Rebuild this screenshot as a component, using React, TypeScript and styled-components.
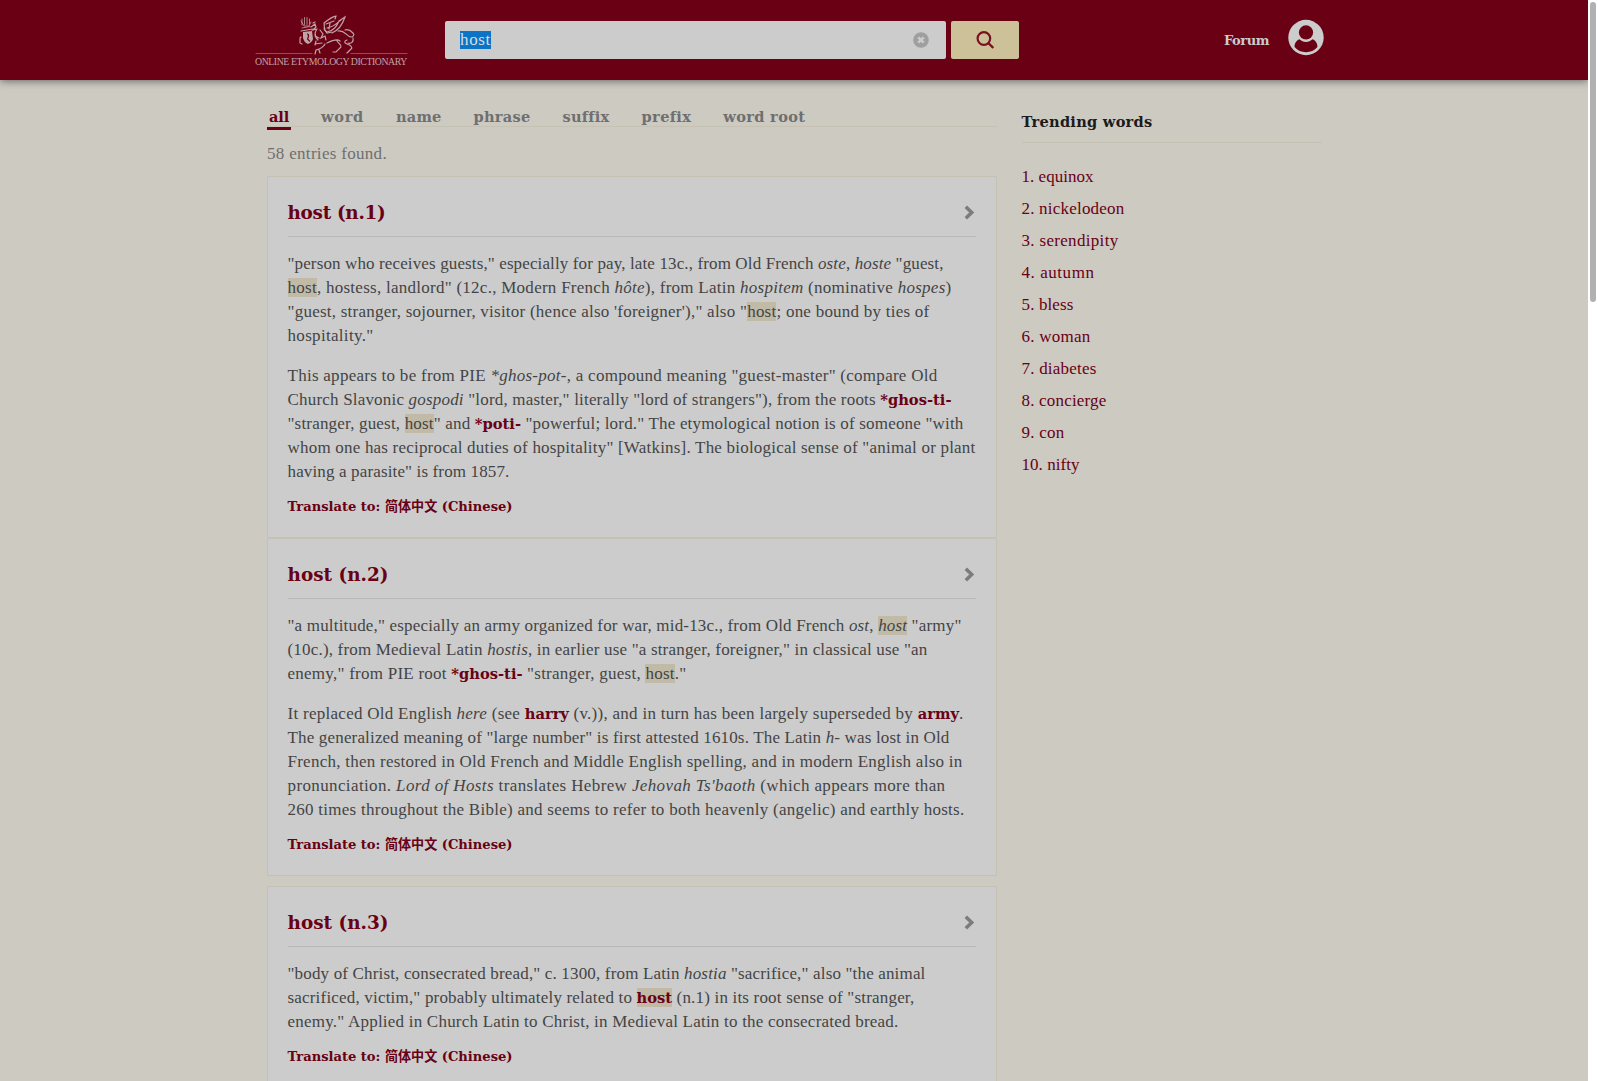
import React, { useLayoutEffect, useRef, useState } from "react";
import styled, { createGlobalStyle, css } from "styled-components";

const colors = {
  page: "#cdcac2",
  card: "#cccccc",
  brand: "#690014",
  text: "#444444",
  muted: "#6f6f6f",
  rule: "#c5c1b3",
  mark: "#c1baa6",
};

const GlobalStyle = createGlobalStyle`
  * { box-sizing: border-box; }
  body {
    margin: 0;
    background: #fff;
    overflow: hidden;
    font-family: Georgia, "Liberation Serif", "Noto Sans CJK SC", serif;
    font-size: 17px;
    color: ${colors.text};
  }
  h1, h2, p, ul, ol { margin: 0; padding: 0; }
  ul, ol { list-style: none; }
`;

const boldFace = css`
  font-family: Georgia, "DejaVu Serif", "Noto Sans CJK SC", serif;
  font-weight: bold;
`;

/* ---------- text set to a measure ---------- */

const Measure = styled.span<{ $block?: boolean }>`
  display: ${(p) => (p.$block ? "block" : "inline-block")};
  width: max-content;
  white-space: pre;
  letter-spacing: var(--track, 0px);
`;

/* Tracks its text so that the line is exactly `width` pixels long; links inside keep their natural spacing. */
function Fit({ width, block, children }: { width: number; block?: boolean; children: React.ReactNode }) {
  const ref = useRef<HTMLSpanElement>(null);
  const [track, setTrack] = useState(0);
  useLayoutEffect(() => {
    const el = ref.current;
    if (!el) return;
    el.style.setProperty("--track", "0px");
    const natural = el.getBoundingClientRect().width;
    let count = (el.textContent || "").length;
    el.querySelectorAll("a").forEach((a) => {
      count -= (a.textContent || "").length;
    });
    const next = count > 0 ? (width - natural) / count : 0;
    el.style.setProperty("--track", `${next}px`);
    setTrack(next);
  }, [width]);
  return (
    <Measure ref={ref} $block={block} style={{ "--track": `${track}px` } as React.CSSProperties}>
      {children}
    </Measure>
  );
}

/* ---------- shell ---------- */

const Shell = styled.div`
  display: flex;
  width: 100%;
  height: 1081px;
  overflow: hidden;
`;

const Page = styled.div`
  flex: 1;
  display: flex;
  flex-direction: column;
  background: ${colors.page};
  overflow: hidden;
`;

const ScrollTrack = styled.div`
  width: 10px;
  padding: 2px;
  background: #fff;
`;

const ScrollThumb = styled.div`
  width: 6px;
  height: 300px;
  border-radius: 3px;
  background: #b1b1b1;
`;

/* ---------- header ---------- */

const Header = styled.header`
  flex: none;
  height: 80px;
  padding-left: 255px;
  display: flex;
  align-items: flex-start;
  background: ${colors.brand};
  box-shadow: 0 1px 8px rgba(0, 0, 0, 0.5);
`;

const Brand = styled.a`
  width: 190px;
  height: 80px;
  padding-top: 15px;
  display: flex;
  flex-direction: column;
  color: #c2a3a6;
  font-size: 9.8px;
  line-height: 12px;
`;

const Emblem = styled.svg`
  width: 153px;
  height: 41px;
  display: block;
`;

const SearchBox = styled.div`
  width: 501px;
  height: 38px;
  margin-top: 21px;
  padding: 0 17px 0 15px;
  display: flex;
  align-items: center;
  justify-content: space-between;
  border-radius: 2px;
  background: ${colors.card};
`;

const Selected = styled.span`
  height: 18px;
  line-height: 17px;
  background: #0b74c4;
  color: #d6dde2;
`;

const SearchButton = styled.button`
  width: 68px;
  height: 38px;
  margin: 21px 0 0 5px;
  padding: 0;
  display: flex;
  align-items: center;
  justify-content: center;
  border: 0;
  border-radius: 2px;
  background: #ccc198;
`;

const Account = styled.nav`
  margin-left: 205px;
  padding-top: 19px;
  display: flex;
  gap: 19px;
`;

const ForumLink = styled.a`
  ${boldFace}
  padding-top: 13px;
  font-size: 13px;
  line-height: 18px;
  color: #cccccc;
`;

/* ---------- body ---------- */

const Columns = styled.main`
  padding: 26px 0 0 267px;
  display: flex;
  gap: 24.5px;
`;

const Results = styled.section`
  width: 730px;
  flex: none;
`;

const Tabs = styled.ul`
  height: 21px;
  display: flex;
  gap: 28px;
  border-bottom: 1px solid ${colors.rule};
`;

const Tab = styled.li<{ $active?: boolean }>`
  ${boldFace}
  height: 24px;
  padding: 0 2px;
  font-size: 14.6px;
  line-height: 22px;
  color: ${(p) => (p.$active ? colors.brand : colors.muted)};
  border-bottom: 3px solid ${(p) => (p.$active ? colors.brand : "transparent")};
`;

const Count = styled.p`
  height: 49px;
  padding-top: 15px;
  line-height: 24px;
  color: ${colors.muted};
`;

const Card = styled.article<{ $gap: number }>`
  margin-top: ${(p) => p.$gap}px;
  padding: 0 20px 17px 19.5px;
  border: 1px solid ${colors.rule};
  border-radius: 2px;
  background: ${colors.card};
`;

const CardHead = styled.header`
  height: 60px;
  padding-top: 10px;
  display: flex;
  align-items: center;
  justify-content: space-between;
  border-bottom: 1px solid #b9b9b9;
`;

const Title = styled.h1`
  ${boldFace}
  padding-top: 3px;
  font-size: 18.4px;
  line-height: 26px;
  color: ${colors.brand};
`;

const Text = styled.div`
  padding: 15px 0 10px;
  display: flex;
  flex-direction: column;
  gap: 16px;
`;

const Para = styled.p`
  height: max-content;
  line-height: 24px;
`;

const Mark = styled.span`
  background: ${colors.mark};
`;

const Root = styled.a`
  ${boldFace}
  font-size: 14.7px;
  line-height: 1;
  letter-spacing: 0;
  color: ${colors.brand};
`;

const Translate = styled.a`
  ${boldFace}
  display: block;
  height: 26px;
  font-size: 13.1px;
  line-height: 25px;
  color: ${colors.brand};
`;

const Aside = styled.aside`
  width: 300px;
`;

const AsideTitle = styled.h2`
  ${boldFace}
  height: 37px;
  padding-top: 4px;
  font-size: 14.6px;
  line-height: 24px;
  color: #1b1b1b;
  border-bottom: 1px solid ${colors.rule};
`;

const Trending = styled.ol`
  padding-top: 18px;
`;

const TrendingItem = styled.li`
  height: 32px;
  line-height: 32px;
  color: ${colors.brand};
`;

/* ---------- drawings ---------- */

function Lion() {
  return (
    <Emblem viewBox="0 0 153 41" fill="none" stroke="#c2a3a6" strokeWidth="1.2" strokeLinecap="round">
      <path d="M1 38.500H57M96 38.500H152" strokeWidth="1" stroke="#944b57" />
      <path d="M47 4v6M49.500 2.500v7M52 2.500v7M54.500 4v5M46 6l3 5h5l2-4M47 13l8-1.500" strokeWidth="0.8" />
      <path d="M48 17l9-1 1 8c-1 3-3 4-5 5-3-1-4-3-5-6z" fill="#c2a3a6" stroke="none" />
      <path d="M52.500 19c2 1 1 3 0 5l2 2" stroke={colors.brand} />
      <path d="M46 22l-1 1v5l2 1M46 16l12-2" />
      <path d="M56 12l4-3 1 3-3 3 4-1M58 8l2-1M62 14c-3 4-2 8 1 11M60 21l4 2M61 26l-1 4M65 15l3 4-2 4 4-2 1 4M60 29l7-1M69 14l3 4 5-1" />
      <path d="M69 8c6-5 11-7 12-7l-1 3M69 8c1 4-1 7 3 9 7-1 10-6 12-11M84 6l6-4c-2 6-6 13-13 16M71 9l8-3M72 13c7-1 10-5 14-8M75 8l-1 6" />
      <path d="M83 16c7-1 8 5 13 6 2 0 4-2 2-4-2-2-5-4-8-3M72 28c4-2 10-5 13-2M98 23c1 4-2 6-5 5M92 25c-3 1-3 3 0 4 4 1 6 4 4 5l-4 4M82 26c2 3 5 4 4 6l-5 5h-3M70 29c-2 4-5 5-9 6l-1 4M64 35l1 3" />
    </Emblem>
  );
}

function ClearIcon() {
  return (
    <svg width="16" height="16" viewBox="0 0 16 16">
      <circle cx="8" cy="8" r="7.800" fill="#9f9f9f" />
      <path d="M5.300 5.300l5.400 5.400M10.700 5.300l-5.400 5.400" stroke="#ccc" strokeWidth="2.600" />
    </svg>
  );
}

function SearchIcon() {
  return (
    <svg width="18" height="18" viewBox="0 0 18 18" fill="none" stroke="#7a1020" strokeWidth="2.200">
      <circle cx="7.900" cy="7.500" r="6.300" />
      <path d="M12.300 12l5 5" strokeWidth="2.400" />
    </svg>
  );
}

function AvatarIcon() {
  return (
    <svg width="36" height="37" viewBox="0 0 37 37">
      <circle cx="18.500" cy="18.500" r="18.200" fill="#cccccc" />
      <circle cx="18.500" cy="13.300" r="7.300" fill={colors.brand} />
      <path
        d="M11.800 20.300C8.300 21.500 6.500 25 6.800 28.300c2.900 3.600 7 5.300 11.700 5.300s8.800-1.700 11.700-5.300c.3-3.300-1.500-6.800-5-8-1.700 1.700-4 2.700-6.700 2.700s-5-1-6.700-2.700z"
        fill={colors.brand}
      />
    </svg>
  );
}

function Chevron() {
  return (
    <svg width="12" height="18" viewBox="0 0 12 18" fill="none" stroke="#7c7c7c" strokeWidth="3.500">
      <path d="M1.800 3.800L7.700 9.500l-5.900 5.700" />
    </svg>
  );
}

/* ---------- content ---------- */

type Line = [number, React.ReactNode];
type Entry = { title: string; titleWidth: number; gap: number; paras: Line[][] };

const host = <Mark>host</Mark>;

const entries: Entry[] = [
  {
    title: "host (n.1)",
    titleWidth: 98,
    gap: 0,
    paras: [
      [
        [656, <>"person who receives guests," especially for pay, late 13c., from Old French <i>oste</i>, <i>hoste</i> "guest,</>],
        [664, <>{host}, hostess, landlord" (12c., Modern French <i>hôte</i>), from Latin <i>hospitem</i> (nominative <i>hospes</i>)</>],
        [642, <>"guest, stranger, sojourner, visitor (hence also 'foreigner')," also "{host}; one bound by ties of</>],
        [86, <>hospitality."</>],
      ],
      [
        [650, <>This appears to be from PIE <i>*ghos-pot-</i>, a compound meaning "guest-master" (compare Old</>],
        [664, <>Church Slavonic <i>gospodi</i> "lord, master," literally "lord of strangers"), from the roots <Root>*ghos-ti-</Root></>],
        [676, <>"stranger, guest, {host}" and <Root>*poti-</Root> "powerful; lord." The etymological notion is of someone "with</>],
        [688, <>whom one has reciprocal duties of hospitality" [Watkins]. The biological sense of "animal or plant</>],
        [222, <>having a parasite" is from 1857.</>],
      ],
    ],
  },
  {
    title: "host (n.2)",
    titleWidth: 101,
    gap: 0,
    paras: [
      [
        [674, <>"a multitude," especially an army organized for war, mid-13c., from Old French <i>ost</i>, <i>{host}</i> "army"</>],
        [640, <>(10c.), from Medieval Latin <i>hostis</i>, in earlier use "a stranger, foreigner," in classical use "an</>],
        [399, <>enemy," from PIE root <Root>*ghos-ti-</Root> "stranger, guest, {host}."</>],
      ],
      [
        [676, <>It replaced Old English <i>here</i> (see <Root>harry</Root> (v.)), and in turn has been largely superseded by <Root>army</Root>.</>],
        [662, <>The generalized meaning of "large number" is first attested 1610s. The Latin <i>h-</i> was lost in Old</>],
        [675, <>French, then restored in Old French and Middle English spelling, and in modern English also in</>],
        [658, <>pronunciation. <i>Lord of Hosts</i> translates Hebrew <i>Jehovah Ts'baoth</i> (which appears more than</>],
        [677, <>260 times throughout the Bible) and seems to refer to both heavenly (angelic) and earthly hosts.</>],
      ],
    ],
  },
  {
    title: "host (n.3)",
    titleWidth: 101,
    gap: 10,
    paras: [
      [
        [638, <>"body of Christ, consecrated bread," c. 1300, from Latin <i>hostia</i> "sacrifice," also "the animal</>],
        [627, <>sacrificed, victim," probably ultimately related to <Mark><Root>host</Root></Mark> (n.1) in its root sense of "stranger,</>],
        [611, <>enemy." Applied in Church Latin to Christ, in Medieval Latin to the consecrated bread.</>],
      ],
    ],
  },
];

const tabs: [string, number][] = [
  ["all", 20],
  ["word", 43],
  ["name", 45.5],
  ["phrase", 57],
  ["suffix", 46.5],
  ["prefix", 48.5],
  ["word root", 82],
];

const trending: [string, number][] = [
  ["equinox", 72],
  ["nickelodeon", 103],
  ["serendipity", 97],
  ["autumn", 73],
  ["bless", 52],
  ["woman", 69],
  ["diabetes", 75],
  ["concierge", 85],
  ["con", 43],
  ["nifty", 58],
];

export default function App() {
  return (
    <>
      <GlobalStyle />
      <Shell>
        <Page>
          <Header>
            <Brand>
              <Lion />
              <Fit width={152}>ONLINE ETYMOLOGY DICTIONARY</Fit>
            </Brand>
            <SearchBox>
              <Selected><Fit width={31}>host</Fit></Selected>
              <ClearIcon />
            </SearchBox>
            <SearchButton aria-label="Search">
              <SearchIcon />
            </SearchButton>
            <Account>
              <ForumLink><Fit width={45}>Forum</Fit></ForumLink>
              <AvatarIcon />
            </Account>
          </Header>
          <Columns>
            <Results>
              <Tabs>
                {tabs.map(([label, width], i) => (
                  <Tab key={label} $active={i === 0}>
                    <Fit width={width}>{label}</Fit>
                  </Tab>
                ))}
              </Tabs>
              <Count><Fit width={120}>58 entries found.</Fit></Count>
              {entries.map((entry) => (
                <Card key={entry.title} $gap={entry.gap}>
                  <CardHead>
                    <Title><Fit width={entry.titleWidth}>{entry.title}</Fit></Title>
                    <Chevron />
                  </CardHead>
                  <Text>
                    {entry.paras.map((lines, p) => (
                      <Para key={p}>
                        {lines.map(([width, content], l) => (
                          <Fit key={l} block width={width}>{content}</Fit>
                        ))}
                      </Para>
                    ))}
                  </Text>
                  <Translate><Fit width={225}>Translate to: 简体中文 (Chinese)</Fit></Translate>
                </Card>
              ))}
            </Results>
            <Aside>
              <AsideTitle><Fit width={131}>Trending words</Fit></AsideTitle>
              <Trending>
                {trending.map(([word, width], i) => (
                  <TrendingItem key={word}>
                    <Fit width={width}>{`${i + 1}. ${word}`}</Fit>
                  </TrendingItem>
                ))}
              </Trending>
            </Aside>
          </Columns>
        </Page>
        <ScrollTrack>
          <ScrollThumb />
        </ScrollTrack>
      </Shell>
    </>
  );
}
